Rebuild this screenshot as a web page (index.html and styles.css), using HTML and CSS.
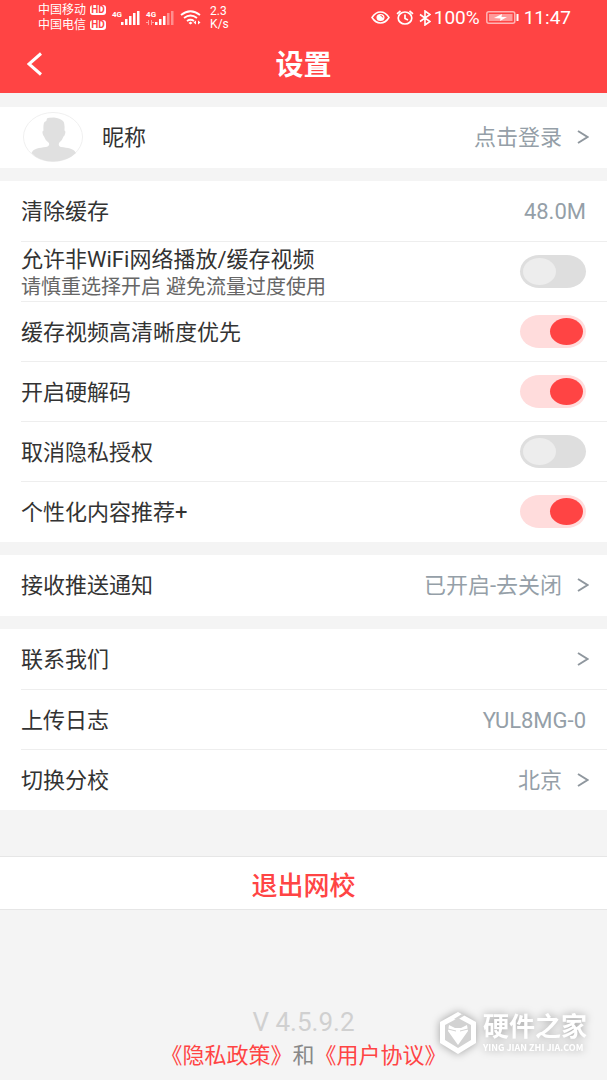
FILE: index.html
```html
<!DOCTYPE html>
<html lang="zh-CN">
<head>
    <meta charset="UTF-8">
    <meta name="viewport" content="width=device-width, initial-scale=1.0">
    <title>设置</title>
    <link rel="stylesheet" href="styles.css">
</head>
<body>
    <div class="page">
        <header class="header">
            <div class="status-bar">
                <div class="carriers">
                    <div class="carrier">中国移动<span class="hd">HD</span></div>
                    <div class="carrier">中国电信<span class="hd">HD</span></div>
                </div>
                <div class="signals">
                    <div class="signal">
                        <span class="net">4G</span>
                        <svg width="19" height="14" viewBox="0 0 19 14" fill="#fff">
                            <rect x="0" y="11" width="2.500" height="3"/><rect x="4" y="8" width="2.500" height="6"/><rect x="8" y="5" width="2.500" height="9"/><rect x="12" y="2" width="2.500" height="12"/><rect x="16" y="0" width="2.500" height="14"/>
                        </svg>
                    </div>
                    <div class="signal">
                        <span class="net">4G</span>
                        <svg width="28" height="14" viewBox="0 0 28 14" fill="#fff">
                            <path d="M0 11.500h3M2.500 9v5M5.500 9v5M5 11.500h3" stroke="#fff" opacity=".5"/>
                            <rect x="9" y="11" width="2.500" height="3"/><rect x="13" y="8" width="2.500" height="6"/><rect x="17" y="5" width="2.500" height="9"/><rect x="21" y="2" width="2.500" height="12" opacity=".4"/><rect x="25" y="0" width="2.500" height="14" opacity=".4"/>
                        </svg>
                    </div>
                    <svg class="wifi" width="21" height="15" viewBox="0 0 21 15" fill="none" stroke="#fff" stroke-width="1.800">
                        <path d="M1 5Q10.500-2.500 20 5M4 8Q10.500 3 17 8M7 11Q10.500 8.500 14 11"/>
                        <path d="M8.500 13L10.500 11.500 12.500 13 10.500 14.500zM16 10.500v4L13.500 12.500zM18 10.500v4L20.500 12.500z" fill="#fff" stroke="none"/>
                    </svg>
                </div>
                <div class="speed">2.3<br>K/s</div>
                <div class="status-right">
                    <svg width="19" height="13" viewBox="0 0 19 13" fill="none" stroke="#fff" stroke-width="1.500">
                        <path d="M1 6.500Q4.500 1 9.500 1T18 6.500Q14.500 12 9.500 12T1 6.500z"/>
                        <ellipse cx="9.500" cy="6.500" rx="4" ry="3.500" fill="#fff" stroke="none"/>
                        <path d="M9.500 4.500Q11.500 4.500 11.800 6.500" stroke="#ff4444" stroke-width="1"/>
                    </svg>
                    <svg class="alarm" width="18" height="15" viewBox="0 0 18 15" fill="none" stroke="#fff" stroke-width="1.700">
                        <ellipse cx="9" cy="8" rx="6.800" ry="6"/>
                        <path d="M1 3.800L4.500 1M17 3.800L13.500 1M9 4.500V8.500L12 10"/>
                    </svg>
                    <svg width="12" height="16" viewBox="0 0 12 16" fill="none" stroke="#fff" stroke-width="1.600">
                        <path d="M1 4.500L11 11.500 6 15V1L11 4.500 1 11.500"/>
                    </svg>
                    <span class="battery-text">100%</span>
                    <svg class="battery" width="33" height="13" viewBox="0 0 33 13">
                        <rect x=".8" y=".8" width="28" height="11.400" rx="2" fill="none" stroke="#ffb4b4" stroke-width="1.500"/>
                        <rect x="3" y="3" width="23.500" height="7" fill="#ff9b9b"/>
                        <path d="M8 7L16 3 15.500 6H21L14 10 14.500 7.500z" fill="#fff"/>
                        <rect x="30.500" y="3" width="2" height="7" fill="#fff"/>
                    </svg>
                    <span>11:47</span>
                </div>
            </div>
            <div class="title-bar">
                <button class="back" type="button" aria-label="返回">
                    <svg width="16" height="24" viewBox="0 0 16 24" fill="none" stroke="#fff" stroke-width="3">
                        <path d="M14 1.500L2 12 14 22.500"/>
                    </svg>
                </button>
                <h1 class="title">设置</h1>
            </div>
        </header>

        <main class="main">
            <section class="card">
                <a class="row" href="#">
                    <svg class="avatar" width="60" height="50" viewBox="0 0 60 50">
                        <ellipse cx="30" cy="25" rx="29.500" ry="24.500" fill="#fff" stroke="#f0f0f0"/>
                        <path d="M24 6.500Q25 5.500 31 5.500 37 6 40 9Q42 11 41.500 18.500 43 19 42 22 41.500 24 40.500 24.500 39 29 36 31 35 34 38 35C45 36 50 36 53 41Q44 49.500 30 49.500T8.500 41C11 36 16 36 23 35Q27 34 26 31 22 28 21 24.500 20 24 19.500 21 19 19 20.500 18.500 20 12 21.500 10 24 9 24 6.500z" fill="#e0e0e0"/>
                    </svg>
                    <span class="label">昵称</span>
                    <span class="value">点击登录</span>
                    <svg class="arrow" width="12" height="14" viewBox="0 0 12 14"><path d="M1 1L10.500 7 1 13"/></svg>
                </a>
            </section>

            <section class="card">
                <div class="row">
                    <span class="label">清除缓存</span>
                    <span class="value">48.0M</span>
                </div>
                <div class="row">
                    <label class="label" for="wifi">允许非WiFi网络播放/缓存视频<small class="tip">请慎重选择开启 避免流量过度使用</small></label>
                    <input class="switch" type="checkbox" id="wifi">
                </div>
                <div class="row">
                    <label class="label" for="quality">缓存视频高清晰度优先</label>
                    <input class="switch" type="checkbox" id="quality" checked>
                </div>
                <div class="row">
                    <label class="label" for="decode">开启硬解码</label>
                    <input class="switch" type="checkbox" id="decode" checked>
                </div>
                <div class="row">
                    <label class="label" for="privacy">取消隐私授权</label>
                    <input class="switch" type="checkbox" id="privacy">
                </div>
                <div class="row">
                    <label class="label" for="recommend">个性化内容推荐+</label>
                    <input class="switch" type="checkbox" id="recommend" checked>
                </div>
            </section>

            <section class="card">
                <a class="row" href="#">
                    <span class="label">接收推送通知</span>
                    <span class="value">已开启-去关闭</span>
                    <svg class="arrow" width="12" height="14" viewBox="0 0 12 14"><path d="M1 1L10.500 7 1 13"/></svg>
                </a>
            </section>

            <section class="card">
                <a class="row" href="#">
                    <span class="label">联系我们</span>
                    <svg class="arrow" width="12" height="14" viewBox="0 0 12 14"><path d="M1 1L10.500 7 1 13"/></svg>
                </a>
                <div class="row">
                    <span class="label">上传日志</span>
                    <span class="value">YUL8MG-0</span>
                </div>
                <a class="row" href="#">
                    <span class="label">切换分校</span>
                    <span class="value">北京</span>
                    <svg class="arrow" width="12" height="14" viewBox="0 0 12 14"><path d="M1 1L10.500 7 1 13"/></svg>
                </a>
            </section>

            <button class="logout" type="button">退出网校</button>
        </main>

        <footer class="footer">
            <p class="version">V 4.5.9.2</p>
            <p class="links"><a href="#">《隐私政策》</a>和<a href="#">《用户协议》</a></p>
        </footer>

        <!-- 右下角水印 -->
        <div class="watermark">
            <svg width="38" height="44" viewBox="0 0 38 44">
                <path d="M19 1L37 11V32L19 43 1 32V11z" fill="#fff"/>
                <path d="M19 7L32 14V29L19 37 6 29V14z" fill="#d2d2d2"/>
                <path d="M15 8L23 3 25.500 4.500 18 9z" fill="#d2d2d2"/>
                <path d="M10 14L16 17H22L28 14 29 20 19 34 9 20z" fill="#fff"/>
                <path d="M9 18L17 20M29 18L21 20" stroke="#d2d2d2"/>
            </svg>
            <div>
                <div class="mark-name">硬件之家</div>
                <div class="mark-url">YING JIAN ZHI JIA.COM</div>
            </div>
        </div>
    </div>
</body>
</html>
```

FILE: styles.css
```css
* {
    box-sizing: border-box;
}
body {
    margin: 0;
    background: #f4f4f4;
    color: #333;
    font-family: Roboto, "Noto Sans CJK SC", sans-serif;
    font-size: 22px;
}
a {
    color: inherit;
    text-decoration: none;
}
button {
    padding: 0;
    border: none;
    background: none;
    font-family: inherit;
    cursor: pointer;
}
svg {
    display: block;
    flex-shrink: 0;
}
.page {
    position: relative;
    display: flex;
    flex-direction: column;
    min-height: 100vh;
}

/* 顶部 */
.header {
    background: #ff4444;
    color: #fff;
}
.status-bar {
    display: flex;
    align-items: center;
    height: 35px;
    padding: 0 36px 0 38px;
    font-size: 12px;
    line-height: 15px;
}
.carrier {
    display: flex;
    align-items: center;
    gap: 4px;
}
.hd {
    width: 16px;
    border-radius: 3px;
    background: #fff;
    color: #ff4444;
    font-size: 10px;
    font-weight: bold;
    line-height: 10px;
    text-align: center;
}
.signals {
    display: flex;
    align-items: center;
    gap: 6px;
    margin-left: 6px;
}
.signal {
    display: flex;
    align-items: flex-end;
}
.signal svg {
    margin-left: -1px;
}
.signal + .signal svg {
    margin-left: -10px;
}
.net {
    align-self: flex-start;
    height: 14px;
    font-size: 8px;
    font-weight: bold;
    line-height: 8px;
}
.speed {
    margin-left: 9px;
    line-height: 13px;
}
.status-right {
    display: flex;
    align-items: center;
    margin-left: auto;
    font-size: 19px;
}
.alarm {
    margin: 0 5px 0 6px;
}
.battery-text {
    margin-left: 3px;
}
.battery {
    margin: 0 5px 0 6px;
}
.title-bar {
    display: grid;
    grid-template-columns: 72px 1fr 72px;
    align-items: center;
    height: 58px;
}
.back {
    padding-left: 27px;
}
.title {
    margin: 0;
    padding-top: 4px;
    font-size: 28px;
    line-height: 40px;
    text-align: center;
}

/* 设置列表 */
.main {
    display: flex;
    flex-direction: column;
    gap: 13px;
    padding-top: 14px;
}
.card {
    padding: 0 0 1px 21px;
    background: #fff;
}
.row {
    display: flex;
    align-items: center;
    height: 60px;
    padding-right: 21px;
    line-height: 28px;
}
.row + .row {
    border-top: 1px solid #eee;
}
.avatar {
    margin: 0 19px 0 2px;
}
.label,
.value {
    padding-top: 2px;
}
.label {
    flex: 1;
}
.tip {
    display: block;
    color: #666;
    font-size: 20px;
    line-height: 26px;
}
.value {
    color: #959fa8;
}
.arrow {
    margin: 0 -3px 0 15px;
    fill: none;
    stroke: #8f979e;
    stroke-width: 2;
}
.switch {
    appearance: none;
    width: 66px;
    height: 33px;
    margin: 0;
    padding: 3px;
    border-radius: 20px / 17px;
    background: #dedede;
    cursor: pointer;
}
.switch::before {
    content: "";
    display: block;
    width: 33px;
    height: 27px;
    border-radius: 50%;
    background: #ededed;
}
.switch:checked {
    background: #ffdcdc;
}
.switch:checked::before {
    margin-left: auto;
    background: #ff4444;
}
.logout {
    height: 54px;
    margin-top: 33px;
    border-top: 1px solid #e6e6e6;
    border-bottom: 1px solid #e6e6e6;
    background: #fff;
    color: #ff4444;
    font-size: 26px;
    font-weight: 500;
}

/* 底部 */
.footer {
    margin-top: auto;
    padding-bottom: 7px;
    color: #888;
    text-align: center;
}
.footer p {
    margin: 0;
    line-height: 34px;
}
.footer .version {
    color: #d0d0d0;
    font-size: 26px;
}
.links a {
    color: #ff4444;
}
.watermark {
    position: absolute;
    right: 20px;
    bottom: 25px;
    display: flex;
    align-items: center;
    gap: 6px;
    color: #fff;
    font-weight: bold;
    filter: drop-shadow(0 0 4px rgba(0, 0, 0, 0.35));
}
.mark-name {
    font-size: 26px;
    line-height: 29px;
}
.mark-url {
    font-family: "Noto Sans CJK SC", sans-serif;
    font-size: 9px;
    line-height: 12px;
    white-space: nowrap;
}
```
